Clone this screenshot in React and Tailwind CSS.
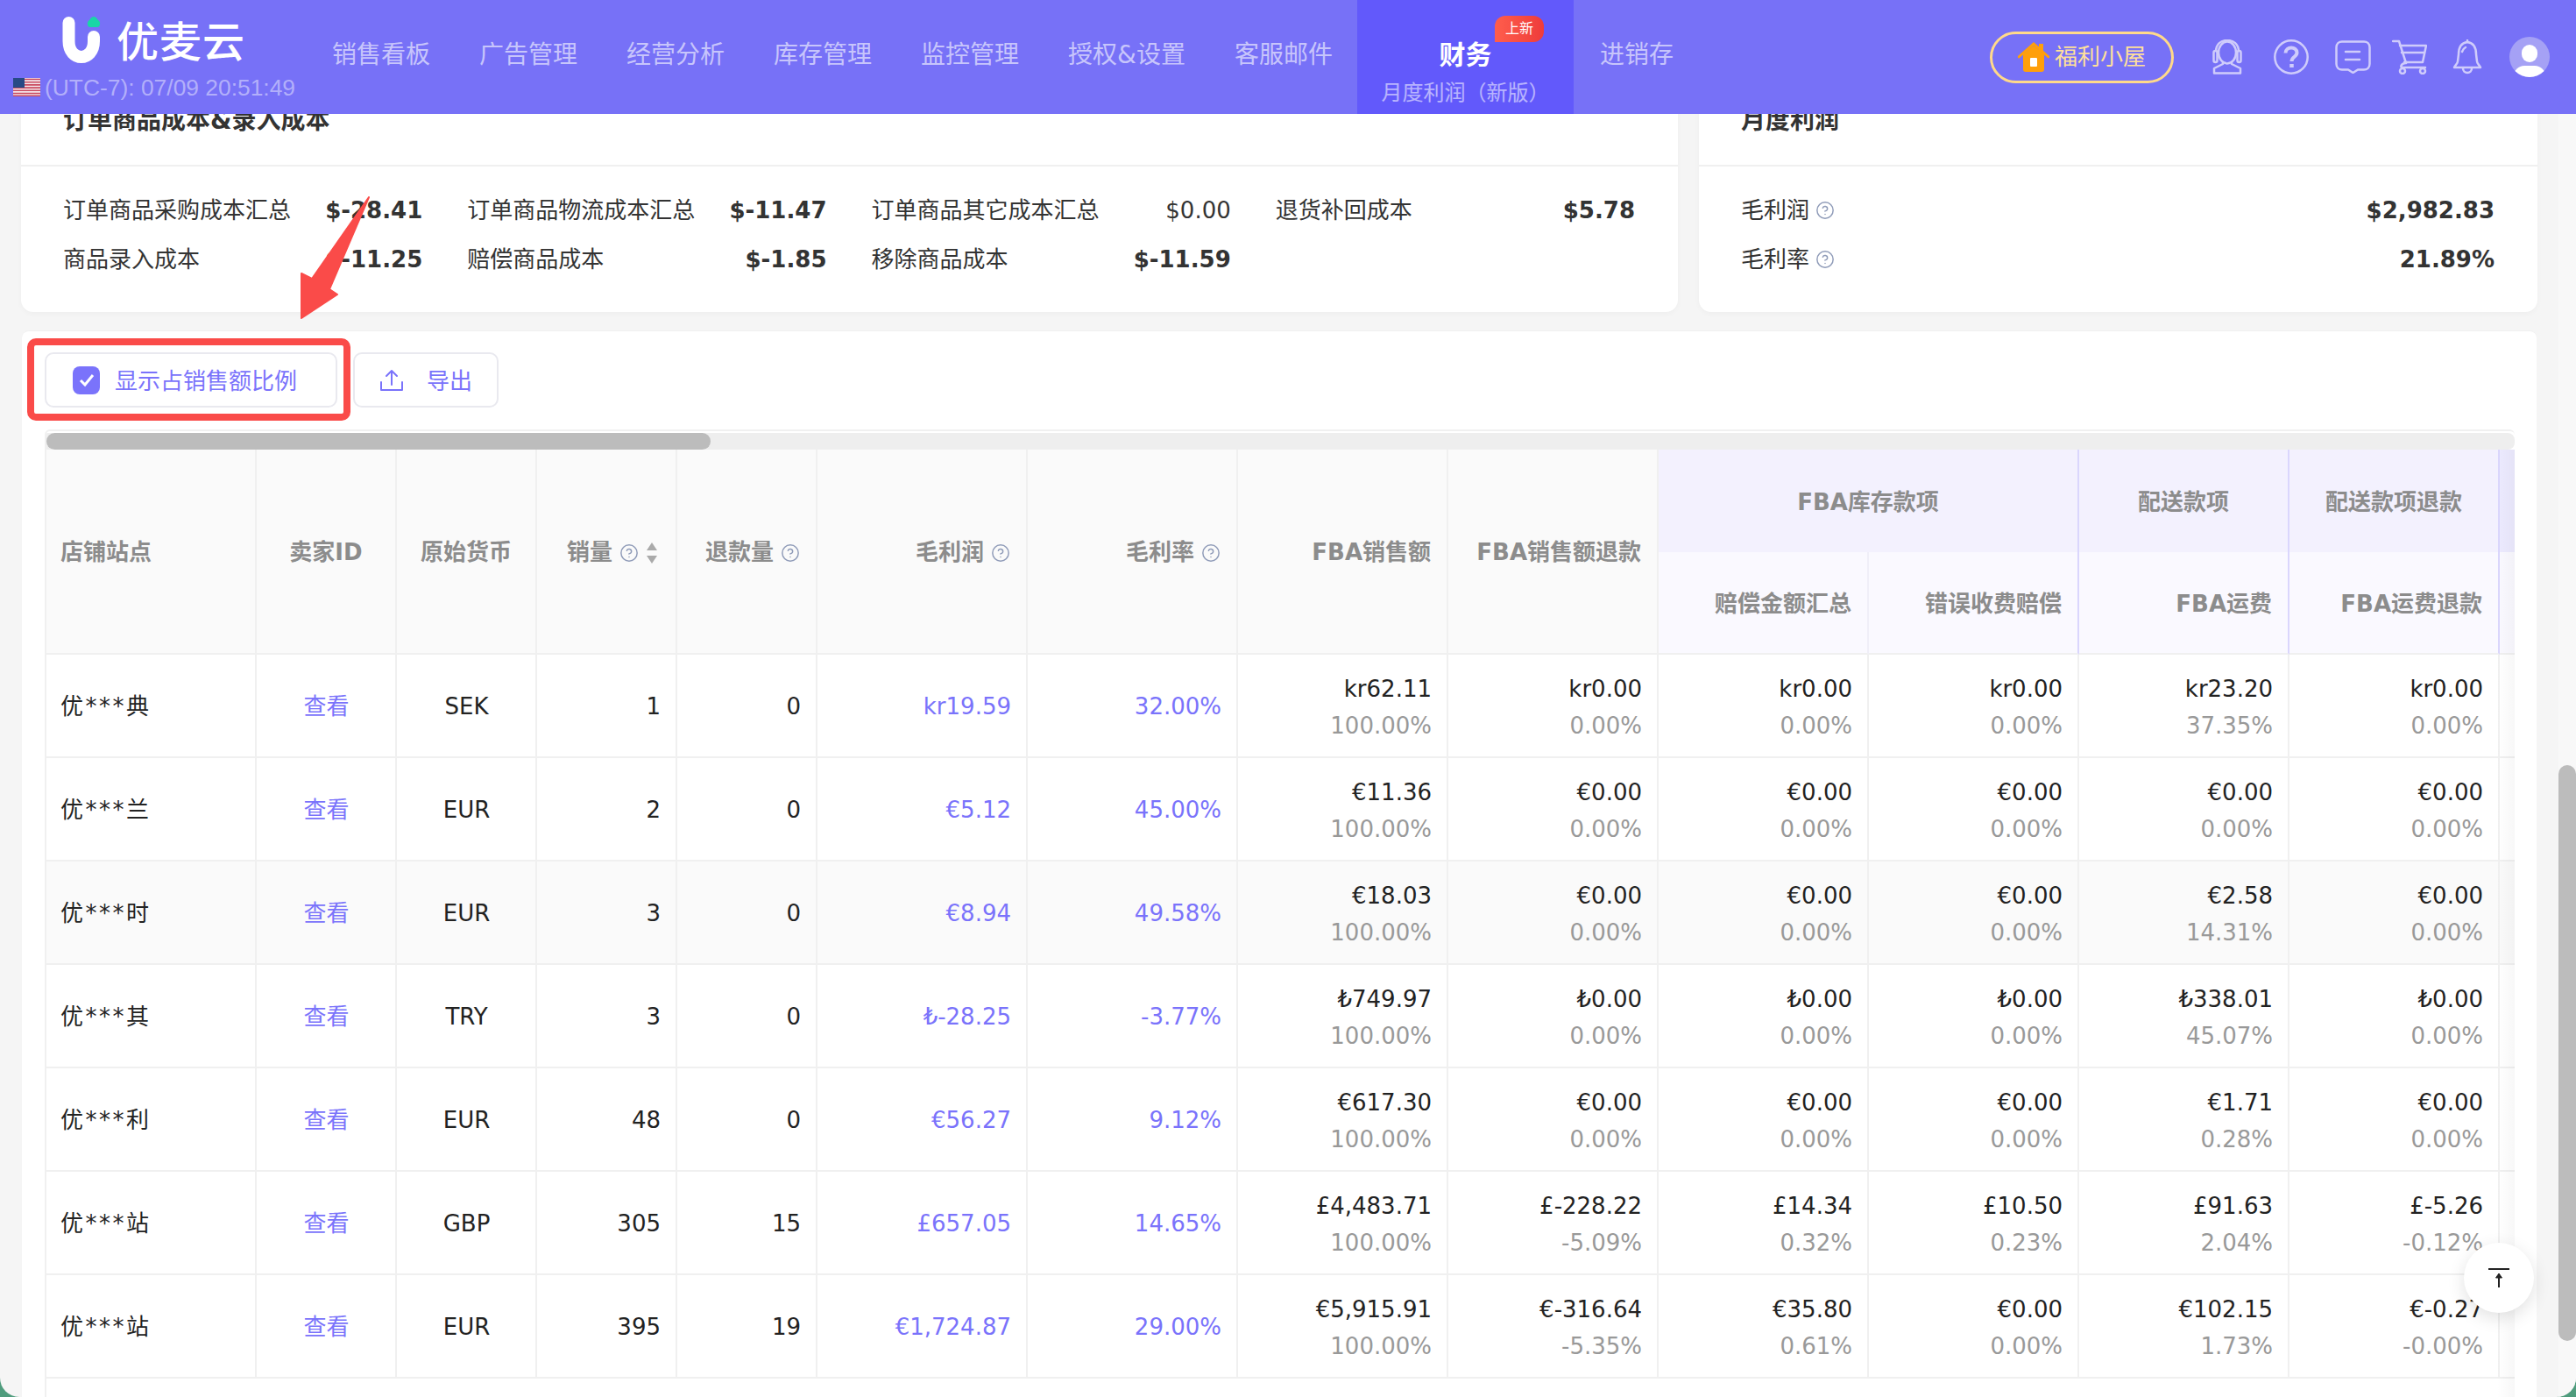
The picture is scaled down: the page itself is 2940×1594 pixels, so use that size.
import { CircleHelp } from 'lucide-react'

const navItems = ['销售看板', '广告管理', '经营分析', '库存管理', '监控管理', '授权&设置', '客服邮件']

const costs = [
  ['订单商品采购成本汇总', '$-28.41', true],
  ['订单商品物流成本汇总', '$-11.47', true],
  ['订单商品其它成本汇总', '$0.00', false],
  ['退货补回成本', '$5.78', true],
  ['商品录入成本', '$-11.25', true],
  ['赔偿商品成本', '$-1.85', true],
  ['移除商品成本', '$-11.59', true],
]

const zero = (c) => [`${c}0.00`, '0.00%']

const rows = [
  { name: '优***典', cur: 'SEK', qty: 1, refund: 0, profit: 'kr19.59', rate: '32.00%', cells: [['kr62.11', '100.00%'], zero('kr'), zero('kr'), zero('kr'), ['kr23.20', '37.35%'], zero('kr')] },
  { name: '优***兰', cur: 'EUR', qty: 2, refund: 0, profit: '€5.12', rate: '45.00%', cells: [['€11.36', '100.00%'], zero('€'), zero('€'), zero('€'), zero('€'), zero('€')] },
  { name: '优***时', cur: 'EUR', qty: 3, refund: 0, profit: '€8.94', rate: '49.58%', hover: true, cells: [['€18.03', '100.00%'], zero('€'), zero('€'), zero('€'), ['€2.58', '14.31%'], zero('€')] },
  { name: '优***其', cur: 'TRY', qty: 3, refund: 0, profit: '₺-28.25', rate: '-3.77%', cells: [['₺749.97', '100.00%'], zero('₺'), zero('₺'), zero('₺'), ['₺338.01', '45.07%'], zero('₺')] },
  { name: '优***利', cur: 'EUR', qty: 48, refund: 0, profit: '€56.27', rate: '9.12%', cells: [['€617.30', '100.00%'], zero('€'), zero('€'), zero('€'), ['€1.71', '0.28%'], zero('€')] },
  { name: '优***站', cur: 'GBP', qty: 305, refund: 15, profit: '£657.05', rate: '14.65%', cells: [['£4,483.71', '100.00%'], ['£-228.22', '-5.09%'], ['£14.34', '0.32%'], ['£10.50', '0.23%'], ['£91.63', '2.04%'], ['£-5.26', '-0.12%']] },
  { name: '优***站', cur: 'EUR', qty: 395, refund: 19, profit: '€1,724.87', rate: '29.00%', cells: [['€5,915.91', '100.00%'], ['€-316.64', '-5.35%'], ['€35.80', '0.61%'], ['€0.00', '0.00%'], ['€102.15', '1.73%'], ['€-0.27', '-0.00%']] },
]

const colWidths = [240, 160, 160, 160, 160, 240, 240, 240, 240, 240, 240, 240, 240, 240]

// faint tiled account number over the page
const marks = []
for (let j = 0; j < 28; j++) {
  for (let i = -1; i < 11; i++) {
    const x = 172 + 287 * i - (j % 2 ? 143 : 0)
    const y = 178 - 7 * i + 55 * j
    if (x > 40 && x < 2900 && y > 150 && y < 1560) marks.push({ x, y })
  }
}

export default function App() {
  return (
    <div className="h-[1594px] overflow-hidden bg-[#4f9c7d] font-['DejaVu_Sans','Noto_Sans_CJK_SC',sans-serif] text-[26px] text-[#333]">
      <div className="relative flex h-full flex-col overflow-hidden rounded-b-[22px] bg-[#f5f5f5]">
        <Header />
        <div className="flex min-h-0 flex-1">
          <div className="min-w-0 flex-1 pl-[24px] pr-[24px]">
            <div className="mt-[-42px] flex gap-[24px]">
              <CostCard />
              <ProfitCard />
            </div>
            <TableCard />
          </div>
          <div className="w-[20px] shrink-0 bg-[#f8f8f8]">
            <div className="mt-[743px] h-[657px] rounded-full bg-[#bcbcbc]" />
          </div>
        </div>

        <div className="pointer-events-none absolute inset-0 z-10 overflow-hidden">
          {marks.map((m, idx) => (
            <span
              key={idx}
              className="absolute -translate-x-1/2 -translate-y-1/2 rotate-[-27deg] text-[24px] text-black/[.02]"
              style={{ left: m.x, top: m.y }}
            >
              17185
            </span>
          ))}
        </div>

        <svg className="pointer-events-none absolute left-0 top-0 z-[15]" width="500" height="400">
          <path d="M421 225 L376 330 L385 336 L344 363 L344 312 L356 318 Z" fill="#fa4b49" stroke="#fa4b49" strokeWidth="2" strokeLinejoin="round" />
        </svg>

        <div className="absolute bottom-[96px] right-[48px] z-[15] flex h-[80px] w-[80px] items-center justify-center rounded-full bg-white shadow-[0_6px_20px_rgba(0,0,0,0.12)]">
          <svg width="24" height="24" viewBox="0 0 24 24" fill="none" stroke="#222" strokeWidth="2">
            <path d="M0 2 H24" />
            <path d="M12 23 V8" />
            <path d="M8.5 12 L12 7 L15.5 12 Z" fill="#222" strokeWidth="1" />
          </svg>
        </div>
      </div>
    </div>
  )
}

function Header() {
  return (
    <header className="relative z-20 flex h-[130px] shrink-0 bg-[#7771f7] text-white">
      <div className="w-[351px] shrink-0 pl-[15px]">
        <div className="flex h-[84px] items-start pl-[56px] pt-[19px]">
          <Logo />
          <span className="ml-[18px] mt-[-3px] text-[48px] font-medium leading-[64px] tracking-[1px]">优麦云</span>
        </div>
        <div className="flex h-[30px] items-center">
          <Flag />
          <span className="ml-[5px] pt-[4px] font-['Liberation_Sans',sans-serif] text-[26.4px] text-white/45">(UTC-7): 07/09 20:51:49</span>
        </div>
      </div>

      <nav className="flex">
        {navItems.map((item) => (
          <a key={item} className="flex items-center px-[28px] pb-[4px] text-[28px] text-white/60">{item}</a>
        ))}
        <a className="relative flex w-[247px] flex-col items-center bg-[#6259fb]">
          <span className="mt-[44px] text-[30px] font-bold leading-[38px]">财务</span>
          <span className="mt-[9px] whitespace-nowrap text-[24px] leading-[30px] text-white/55">月度利润（新版）</span>
          <span className="absolute left-[157px] top-[18px] flex h-[30px] w-[56px] items-center justify-center rounded-[12px] rounded-bl-none bg-gradient-to-r from-[#ff5d4c] to-[#ee3b3b] text-[16px]">上新</span>
        </a>
        <a className="flex items-center px-[30px] pb-[4px] text-[28px] text-white/60">进销存</a>
      </nav>

      <div className="ml-auto flex items-center pr-[30px]">
        <div className="flex h-[59px] w-[210px] items-center justify-center gap-[6px] rounded-full border-[3px] border-[#ffd98a] text-[#ffe09a]">
          <House />
          <span className="text-[26px]">福利小屋</span>
        </div>
        <Headset />
        <svg className="ml-[36px]" width="40" height="42" viewBox="0 0 40 42" fill="none" stroke="#cfccfb" strokeWidth="2.5">
          <circle cx="20" cy="21" r="18.7" />
          <path d="M13.5 16.5 C13.5 8.5 26.5 8.5 26.5 16 C26.5 21 20.5 20.5 20.5 26" strokeWidth="4" />
          <path d="M20.5 29 V33" strokeWidth="4.5" />
        </svg>
        <svg className="ml-[30px]" width="41" height="38" viewBox="0 0 41 38" fill="none" stroke="#cfccfb" strokeWidth="2.5" strokeLinejoin="round" strokeLinecap="round">
          <path d="M8 1.5 H33 C36.5 1.5 39.5 4 39.5 8 V27 C39.5 31 36.5 33.5 33 33.5 H26 L20.5 37 L15 33.5 H8 C4.5 33.5 1.5 31 1.5 27 V8 C1.5 4 4.5 1.5 8 1.5 Z" />
          <path d="M12 13 H28 M12 22 H28" />
        </svg>
        <svg className="ml-[24px]" width="40" height="40" viewBox="0 0 40 40" fill="none" stroke="#cfccfb" strokeWidth="2.5" strokeLinejoin="round" strokeLinecap="round">
          <path d="M1 2 H8 L16 27" />
          <path d="M9 7 H39 L35 26 H14" />
          <path d="M11 15 H37" />
          <path d="M15 27 C10 28 9 32 12 32 H38" />
          <circle cx="12" cy="36" r="3" />
          <circle cx="35" cy="36" r="3" />
        </svg>
        <svg className="ml-[29px]" width="34" height="40" viewBox="0 0 34 40" fill="none" stroke="#cfccfb" strokeWidth="2.5" strokeLinejoin="round" strokeLinecap="round">
          <path d="M17 3 C9 4 7 11 7 17 L6 25 C6 28 3 29 2 32 H32 C31 29 28 28 28 25 L27 17 C27 11 25 4 17 3 Z" />
          <path d="M12 33 A5 5 0 0 0 22 33" />
          <path d="M11 14 C12 11 13 10 15 9" />
          <path d="M17 1 V3" />
        </svg>
        <div className="relative ml-[31px] h-[46px] w-[46px] overflow-hidden rounded-full bg-[#a5a1f5]">
          <div className="absolute left-[14px] top-[9px] h-[20px] w-[18px] rounded-full bg-white" />
          <div className="absolute left-[5px] top-[33px] h-[24px] w-[36px] rounded-full bg-white" />
        </div>
      </div>
    </header>
  )
}

function Logo() {
  return (
    <svg width="44" height="54" viewBox="0 0 44 54" fill="none" className="shrink-0">
      <path d="M7.5 7 V28 C7.5 52 36 52 36 28 V23" stroke="#fff" strokeWidth="14" strokeLinecap="round" />
      <path d="M36 0 C39 0 40 3 41 4 C44 5 44 12 40 12 H32 C28 12 28 5 31 4 C32 3 33 0 36 0 Z" fill="#19d6a6" />
    </svg>
  )
}

function Flag() {
  return (
    <svg width="31" height="21" viewBox="0 0 31 21" className="shrink-0">
      <rect width="31" height="21" fill="#f4e9ec" />
      <path d="M0 1.5 H31 M0 4.7 H31 M0 7.9 H31 M0 11.1 H31 M0 14.3 H31 M0 17.5 H31 M0 20.3 H31" stroke="#c9485e" strokeWidth="1.6" />
      <rect width="13" height="11" fill="#274a85" />
    </svg>
  )
}

function House() {
  return (
    <svg width="36" height="34" viewBox="0 0 36 34" className="shrink-0">
      <path d="M6 14 L18 4 L30 14 V31 C30 33 29 34 27 34 H9 C7 34 6 33 6 31 Z" fill="#ff9f0a" />
      <path d="M1 17 L18 2 L35 17" fill="none" stroke="#ff9f0a" strokeWidth="3" strokeLinecap="round" />
      <rect x="24" y="2" width="5" height="9" fill="#ff9f0a" />
      <rect x="14" y="18" width="8" height="10" rx="1" fill="#fff" />
    </svg>
  )
}

function Headset() {
  return (
    <svg className="ml-[44px]" width="34" height="40" viewBox="0 0 34 40" fill="none" stroke="#cfccfb" strokeWidth="2.5" strokeLinejoin="round">
      <ellipse cx="17" cy="15" rx="10" ry="12.5" />
      <path d="M4 14 C4 5 10 1 17 1 C24 1 30 5 30 14" />
      <rect x="1.5" y="13" width="4" height="13" rx="2" />
      <rect x="28.5" y="13" width="4" height="13" rx="2" />
      <path d="M12 26 V28 L2 33 V38.5 H32 V33 L22 28 V26" />
    </svg>
  )
}

function Help() {
  return <CircleHelp size={22} strokeWidth={1.6} className="shrink-0 text-[#8f9bb8]" />
}

function CostCard() {
  return (
    <div className="w-[1891px] shrink-0 overflow-hidden rounded-b-[14px] bg-white shadow-[0_2px_6px_rgba(0,0,0,0.03)]">
      <div className="flex h-[100px] items-center pl-[48px] text-[28px] font-bold">订单商品成本&录入成本</div>
      <div className="h-[2px] bg-[#f0f0f0]" />
      <div className="grid h-[166px] grid-cols-4 content-start gap-x-[51px] pl-[48px] pr-[49px] pt-[22px]">
        {costs.map(([label, value, bold]) => (
          <div key={label} className="flex h-[56px] items-center justify-between">
            <span>{label}</span>
            <span className={bold ? 'font-bold' : ''}>{value}</span>
          </div>
        ))}
      </div>
    </div>
  )
}

function ProfitCard() {
  return (
    <div className="min-w-0 flex-1 overflow-hidden rounded-b-[14px] bg-white shadow-[0_2px_6px_rgba(0,0,0,0.03)]">
      <div className="flex h-[100px] items-center pl-[48px] text-[28px] font-bold">月度利润</div>
      <div className="h-[2px] bg-[#f0f0f0]" />
      <div className="h-[166px] pl-[48px] pr-[49px] pt-[22px]">
        {[['毛利润', '$2,982.83'], ['毛利率', '21.89%']].map(([label, value]) => (
          <div key={label} className="flex h-[56px] items-center">
            <span>{label}</span>
            <span className="ml-[7px]"><Help /></span>
            <span className="ml-auto font-bold">{value}</span>
          </div>
        ))}
      </div>
    </div>
  )
}

function TableCard() {
  return (
    <div className="relative mx-[1px] mt-[21px] rounded-t-[8px] border-t border-[#f0f0f0] bg-white pl-[26px] pr-[25px] pt-[24px]">
      <div className="flex gap-[18px] text-[#7a73fb]">
        <div className="flex h-[63px] w-[334px] items-center rounded-[10px] border-2 border-[#e9e9ef] pl-[30px]">
          <span className="flex h-[32px] w-[31px] items-center justify-center rounded-[8px] bg-[#7a73fb]">
            <svg width="18" height="16" viewBox="0 0 18 16" fill="none" stroke="#fff" strokeWidth="3">
              <path d="M2 8 L7 13 L16 2" />
            </svg>
          </span>
          <span className="ml-[17px] pt-[3px]">显示占销售额比例</span>
        </div>
        <div className="flex h-[63px] w-[166px] items-center rounded-[10px] border-2 border-[#e9e9ef] pl-[29px]">
          <svg width="26" height="26" viewBox="0 0 26 26" fill="none" stroke="#7a73fb" strokeWidth="2" strokeLinecap="round" strokeLinejoin="round">
            <path d="M13 18 V2 M7 8 L13 2 L19 8" />
            <path d="M1 15 V24 H25 V15" />
          </svg>
          <span className="ml-[27px] pt-[3px]">导出</span>
        </div>
      </div>
      <div className="absolute left-[6px] top-[8px] h-[94px] w-[369px] rounded-[10px] border-[8px] border-[#fa4b49]" />

      <div className="relative mt-[25px] h-[1200px] overflow-hidden rounded-t-[6px] border-l-2 border-t-2 border-[#f0f0f0]">
        <div className="mt-[2px] h-[19px] rounded-r-[8px] bg-[#eeeeee]">
          <div className="h-full w-[758px] rounded-full bg-[#bcbcbc]" />
        </div>
        <table className="w-[3040px] table-fixed border-separate border-spacing-0">
          <colgroup>
            {colWidths.map((w, i) => <col key={i} style={{ width: w }} />)}
          </colgroup>
          <TableHead />
          <tbody>
            {rows.map((r, i) => <Row key={i} row={r} />)}
          </tbody>
        </table>
        <div className="pointer-events-none absolute bottom-0 right-0 top-[21px] w-[20px] bg-gradient-to-l from-black/[.03] to-transparent" />
      </div>
    </div>
  )
}

function TableHead() {
  const th = 'border-b-2 border-r-2 border-[#f0f0f0] bg-[#fafafa] px-[18px] pt-[3px] font-bold text-[#8c8c8c]'
  const group = 'h-[117px] border-r-2 border-[#dad6fd] bg-[#f3f1fe] pt-[3px] font-bold text-[#8c8c8c]'
  const sub = 'h-[117px] border-b-2 border-r-2 border-b-[#f0f0f0] border-r-[#dad6fd] bg-[#faf9ff] pr-[18px] pt-[3px] text-right font-bold text-[#8c8c8c]'
  return (
    <thead>
      <tr>
        <th rowSpan={2} className={`${th} text-left`}><span className="ml-[-2px]">店铺站点</span></th>
        <th rowSpan={2} className={`${th} text-center`}>卖家ID</th>
        <th rowSpan={2} className={`${th} text-center`}>原始货币</th>
        <th rowSpan={2} className={`${th}`}>
          <div className="flex items-center justify-end gap-[8px] pr-[2px]">
            销量
            <Help />
            <svg width="14" height="24" viewBox="0 0 14 24" fill="#aaa" className="shrink-0">
              <path d="M7 0 L13 9 H1 Z M7 24 L13 15 H1 Z" />
            </svg>
          </div>
        </th>
        <th rowSpan={2} className={`${th}`}>
          <div className="flex items-center justify-end gap-[8px]">退款量<Help /></div>
        </th>
        <th rowSpan={2} className={`${th}`}>
          <div className="flex items-center justify-end gap-[8px]">毛利润<Help /></div>
        </th>
        <th rowSpan={2} className={`${th}`}>
          <div className="flex items-center justify-end gap-[8px]">毛利率<Help /></div>
        </th>
        <th rowSpan={2} className={`${th} text-right`}>FBA销售额</th>
        <th rowSpan={2} className={`${th} text-right`}>FBA销售额退款</th>
        <th colSpan={2} className={group}>FBA库存款项</th>
        <th className={group}>配送款项</th>
        <th className={group}>配送款项退款</th>
        <th className="h-[117px] bg-[#eceafe]" />
      </tr>
      <tr>
        <th className={`${sub} border-r-[#f0eff8]`}>赔偿金额汇总</th>
        <th className={sub}>错误收费赔偿</th>
        <th className={sub}>FBA运费</th>
        <th className={sub}>FBA运费退款</th>
        <th className="h-[117px] border-b-2 border-[#f0f0f0] bg-[#faf9ff]" />
      </tr>
    </thead>
  )
}

function Row({ row }) {
  const td = `h-[118px] border-b-2 border-r-2 border-[#f0f0f0] pl-[18px] pr-[17px] pt-[3px] ${row.hover ? 'bg-[#fafafa]' : ''}`
  return (
    <tr className="text-[#222]">
      <td className={td}><span className="ml-[-2px] tracking-[2.5px]">{row.name}</span></td>
      <td className={`${td} text-center text-[#7a73fb]`}>查看</td>
      <td className={`${td} text-center`}>{row.cur}</td>
      <td className={`${td} text-right`}>{row.qty}</td>
      <td className={`${td} text-right`}>{row.refund}</td>
      <td className={`${td} text-right text-[#7a73fb]`}>{row.profit}</td>
      <td className={`${td} text-right text-[#7a73fb]`}>{row.rate}</td>
      {row.cells.map(([v, p], i) => (
        <td key={i} className={`${td} text-right leading-[42px]`}>
          <div>{v}</div>
          <div className="text-[#999]">{p}</div>
        </td>
      ))}
      <td className={`h-[118px] border-b-2 border-[#f0f0f0] ${row.hover ? 'bg-[#fafafa]' : ''}`} />
    </tr>
  )
}
